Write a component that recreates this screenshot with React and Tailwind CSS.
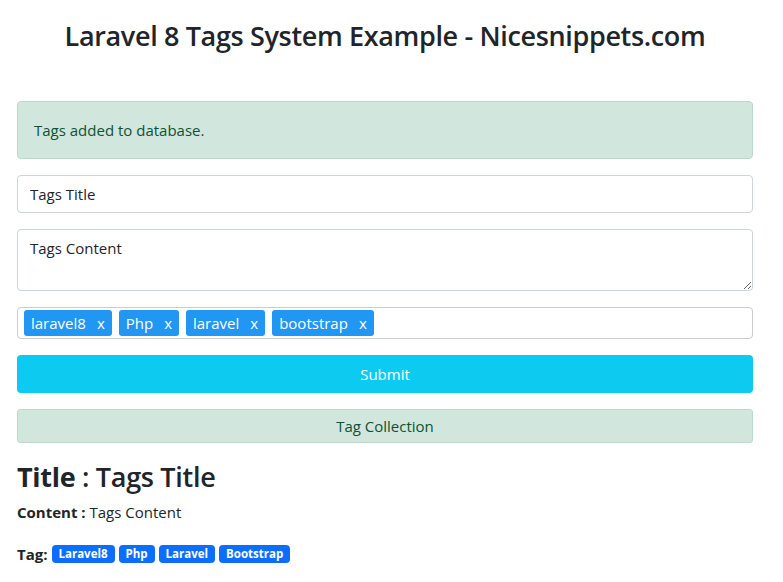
const inputTags = ["laravel8", "Php", "laravel", "bootstrap"];
const savedTags = ["Laravel8", "Php", "Laravel", "Bootstrap"];

export default function App() {
  return (
    <div className="min-h-screen bg-white font-['Open_Sans',sans-serif] text-[#212529]">
      <div className="pl-[17px] pr-[30px]">
        <h2 className="pt-[19px] text-center text-[27px] leading-[34px] font-semibold tracking-[-0.35px]">
          Laravel 8 Tags System Example - Nicesnippets.com
        </h2>

        <div className="mt-[48px] rounded border border-[#badbcc] bg-[#d1e7dd] px-4 py-4 text-[15px] leading-6 text-[#0f5132]">
          Tags added to database.
        </div>

        <form className="mt-4 flex flex-col gap-4">
          <input
            type="text"
            defaultValue="Tags Title"
            className="h-[38px] w-full rounded border border-[#ced4da] px-3 text-[15px] text-[#212529] outline-none"
          />
          <textarea
            defaultValue="Tags Content"
            className="block h-[62px] w-full rounded border border-[#ced4da] px-3 py-[6px] text-[15px] leading-6 text-[#212529] outline-none"
          />
          <div className="flex h-[32px] items-center gap-[7px] rounded border border-[#ccc] px-[6px]">
            {inputTags.map((t) => (
              <span
                key={t}
                className="flex h-[26px] items-center gap-[11px] rounded-[3px] bg-[#2196f3] px-[7px] text-[15px] text-white"
              >
                {t}
                <span className="text-[15px]">x</span>
              </span>
            ))}
          </div>
          <button
            type="button"
            className="h-[38px] w-full rounded bg-[#0dcaf0] text-[15px] text-white"
          >
            Submit
          </button>
        </form>

        <div className="mt-4 flex h-[34px] items-center justify-center rounded-[3px] border border-[#badbcc] bg-[#d1e7dd] text-[15px] text-[#0f5132]">
          Tag Collection
        </div>

        <h2 className="mt-[17px] text-[27px] leading-[34px] font-semibold tracking-[-0.3px]">
          <span className="font-bold">Title</span> : Tags Title
        </h2>
        <p className="mt-[8px] text-[15px] leading-5">
          <span className="font-bold">Content :</span> Tags Content
        </p>
        <div className="mt-[21px] flex items-center gap-[4px] text-[15px]">
          <span className="font-bold">Tag:</span>
          {savedTags.map((t) => (
            <span
              key={t}
              className="rounded-[4px] bg-[#0d6efd] px-[7px] py-[2px] text-[11.5px] leading-[14px] font-bold text-white"
            >
              {t}
            </span>
          ))}
        </div>
      </div>
    </div>
  );
}
